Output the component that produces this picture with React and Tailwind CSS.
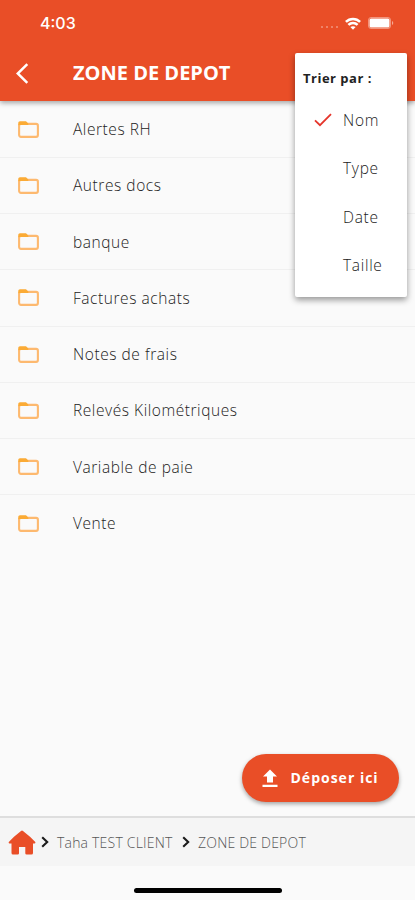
import React, { useState } from 'react';

const folders = [
  'Alertes RH',
  'Autres docs',
  'banque',
  'Factures achats',
  'Notes de frais',
  'Relevés Kilométriques',
  'Variable de paie',
  'Vente',
];

const sortOptions = ['Nom', 'Type', 'Date', 'Taille'];

function StatusBar() {
  return (
    <div className="flex h-[46px] items-center pl-10 pr-[21px] text-white">
      <span className="font-['Inter',sans-serif] text-[16px] font-medium leading-none">4:03</span>
      <div className="ml-auto flex items-center">
        <div className="mr-[7px] mt-2 flex gap-[3px] opacity-30">
          <span className="h-[2px] w-[2px] bg-white"></span>
          <span className="h-[2px] w-[2px] bg-white"></span>
          <span className="h-[2px] w-[2px] bg-white"></span>
          <span className="h-[2px] w-[2px] bg-white"></span>
        </div>
        <svg width="16" height="13" viewBox="0 0 16 13" fill="none" stroke="currentColor" strokeWidth="2.5">
          <path d="M0.9 4.9C4.8 0.9 11.2 0.9 15.1 4.9" />
          <path d="M3.4 7.9C6 5.3 10 5.3 12.6 7.9" />
          <path d="M8 12.8L5.4 10.1C6.8 8.8 9.2 8.8 10.6 10.1Z" fill="currentColor" stroke="none" />
        </svg>
        <svg className="ml-[7px]" width="26" height="12" viewBox="0 0 26 12">
          <rect x="0.5" y="0.5" width="22" height="11" rx="2.5" fill="none" stroke="#fff" strokeOpacity="0.4" />
          <rect x="1.5" y="1.5" width="20" height="9" rx="1.5" fill="#fff" />
          <path d="M24 4v4c1.7-.8 1.7-3.2 0-4z" fill="#fff" fillOpacity="0.5" />
        </svg>
      </div>
    </div>
  );
}

function FolderIcon() {
  return (
    <svg width="21" height="17" viewBox="0 0 21 17" fill="none">
      <rect x="1.1" y="2.9" width="18.8" height="13" rx="1.8" stroke="#fdb96f" strokeWidth="2.1" />
      <path d="M0.3 4.3V2C0.3 1 1 0.3 2 0.3H8L10.3 2.6V4.1H2Z" fill="#fbab35" />
    </svg>
  );
}

function Chevron() {
  return (
    <svg width="8" height="12" viewBox="0 0 8 12" fill="none" stroke="#1b1b1b" strokeWidth="2.1">
      <path d="M1.2 1.2L6.2 6L1.2 10.8" />
    </svg>
  );
}

export default function App() {
  const [sort, setSort] = useState('Nom');

  return (
    <div className="relative flex h-[900px] w-[415px] flex-col overflow-hidden bg-[#fafafa] font-['Open_Sans','Noto_Sans',sans-serif]">
      <header className="z-10 h-[100.5px] shrink-0 bg-[#e94e27] shadow-[0_2px_5px_rgba(0,0,0,0.35)]">
        <StatusBar />
        <div className="flex h-[54px] items-center pl-4 text-white">
          <button className="w-[57px]">
            <svg width="13" height="21" viewBox="0 0 13 21" fill="none" stroke="currentColor" strokeWidth="2.5">
              <path d="M11.3 1.2L1.7 10.5L11.3 19.8" />
            </svg>
          </button>
          <h1 className="text-[20px] font-bold leading-none whitespace-nowrap">ZONE DE DEPOT</h1>
        </div>
      </header>

      <ul className="flex-1 pt-[1px]">
        {folders.map((name, i) => (
          <li
            key={name}
            className={`flex h-[56.25px] items-center pl-[18px] ${i < folders.length - 1 ? 'border-b border-[#f0f0f0]' : ''}`}
          >
            <FolderIcon />
            <span className="ml-[34px] pt-[1.5px] text-[15.5px] font-light leading-none tracking-[0.56px] text-[#222]">{name}</span>
          </li>
        ))}
      </ul>

      <footer className="flex h-[50px] shrink-0 items-center border-t-2 border-[#dedede] bg-[#f5f5f5] pl-[8px] text-[14px] font-light tracking-[0.2px] text-[#555]">
        <svg width="28" height="25" viewBox="0 0 28 25" fill="#e94e27">
          <path d="M13 0.9Q14 0 15 0.9L22 6.8L27.3 12.1Q27.8 13.2 26.7 13.4H25V23Q25 24.5 23.5 24.5H18.6Q17.3 24.5 17.3 23.2V16.9H11V23.2Q11 24.5 9.7 24.5H5Q3.5 24.5 3.5 23V13.4H1.4Q0.2 13.2 0.8 12.1L6 6.8Z" />
        </svg>
        <span className="ml-[5px]"><Chevron /></span>
        <span className="ml-[8px] w-[116px] whitespace-nowrap">Taha TEST CLIENT</span>
        <span className="ml-[9px]"><Chevron /></span>
        <span className="ml-[8px] whitespace-nowrap">ZONE DE DEPOT</span>
      </footer>
      <div className="flex h-[34px] shrink-0 justify-center pt-[21.5px]">
        <div className="h-[5px] w-[148px] rounded-full bg-black"></div>
      </div>

      <button className="absolute right-4 bottom-[98px] flex h-12 w-[157px] items-center rounded-full bg-[#e94e27] pl-5 text-white shadow-[0_2px_4px_rgba(0,0,0,0.35)]">
        <svg width="16" height="19" viewBox="0 0 16 19" fill="currentColor">
          <path d="M8 0.5L15 7.5H11V13.5H5V7.5H1ZM0.5 15.7H15.5V18H0.5Z" />
        </svg>
        <span className="ml-[12.5px] text-[14px] font-bold leading-none tracking-[1px] whitespace-nowrap">Déposer ici</span>
      </button>

      <div className="absolute top-[52.5px] right-[8px] z-20 h-[244px] w-[112px] rounded-[2px] bg-white pt-[9.5px] shadow-[0_3px_6px_rgba(0,0,0,0.4)]">
        <p className="flex h-[34px] items-center pl-2 text-[13px] font-bold tracking-[0.5px] text-[#222] whitespace-nowrap">Trier par :</p>
        {sortOptions.map((option) => (
          <button
            key={option}
            onClick={() => setSort(option)}
            className="flex h-[48.3px] w-full items-center pl-[19px] text-left text-[15.5px] font-light tracking-[0.7px] text-[#222]"
          >
            <span className="w-[29px]">
              {sort === option && (
                <svg width="18" height="14" viewBox="0 0 18 14" fill="none" stroke="#e5352b" strokeWidth="1.8">
                  <path d="M1 7.3L6 12.2L17 1.2" />
                </svg>
              )}
            </span>
            <span className="pt-px">{option}</span>
          </button>
        ))}
      </div>
    </div>
  );
}
